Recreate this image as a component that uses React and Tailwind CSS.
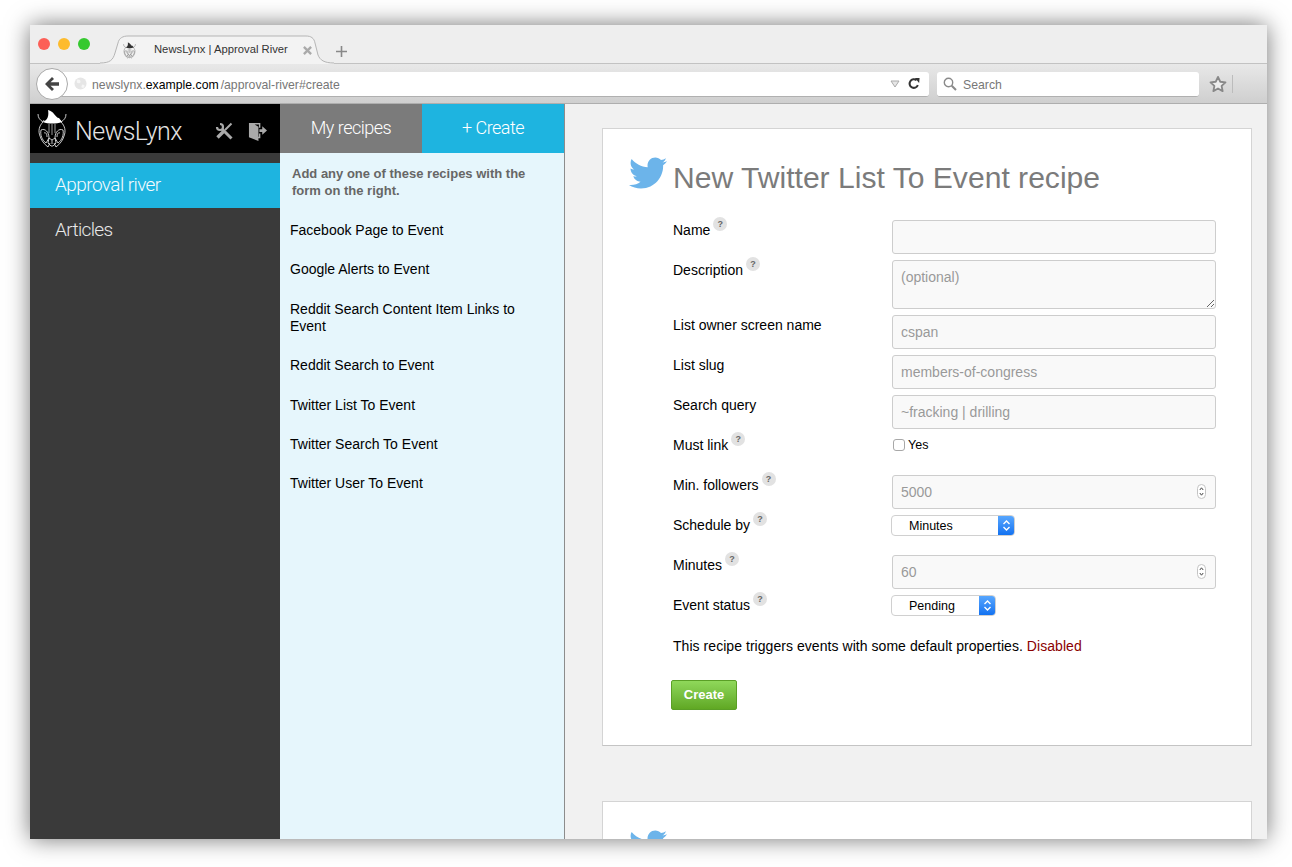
import React from 'react'
import { FaTwitter } from 'react-icons/fa'

const RECIPES = [
   'Facebook Page to Event',
   'Google Alerts to Event',
   'Reddit Search Content Item Links to Event',
   'Reddit Search to Event',
   'Twitter List To Event',
   'Twitter Search To Event',
   'Twitter User To Event',
]

// lynx head with the little hat, stroke colour comes from currentColor
const Lynx = ({ className, hat = '#fff' }) => (
   <svg viewBox="0 0 30 40" className={className} fill="none" stroke="currentColor" strokeWidth="0.9" strokeLinejoin="round">
      <path d="M1 5 C1 9 3 11 6 13 L7 11 M29 5 C29 9 27 11 24 13 L23 11" />
      <path d="M6 13 C2 17 1 22 3 27 C4 31 7 35 11 38 L13 34 M24 13 C28 17 29 22 27 27 C26 31 23 35 19 38 L17 34" />
      <path d="M4 21 C8 19 12 23 12 29 L9 34 C5 31 3 26 4 21 Z M26 21 C22 19 18 23 18 29 L21 34 C25 31 27 26 26 21 Z" />
      <path d="M7 24 C9 23 10 25 10 28 M23 24 C21 23 20 25 20 28" />
      <path d="M12 29 C13 30 14 30 15 31 C16 30 17 30 18 29 L19 34 L16 37 L14 37 L11 34 Z" />
      <path d="M15 31 L15 35" />
      <path d="M12 15 L12 24 M15 15 L15 26 M18 15 L18 24" strokeWidth="0.7" />
      <path d="M6 13 C11 11 12 6 11 1 C14 2 16 3 17 5 C19 7 20 9 22 9 L25 13 C19 15 11 15 6 13 Z" fill={hat} stroke="none" />
   </svg>
)

const Help = () => (
   <span className="ml-[3px] -mt-[5px] flex h-[14px] w-[14px] items-center justify-center rounded-full bg-[#e2e2e2] text-[9px] font-bold leading-none text-[#666]">?</span>
)

const Row = ({ label, help, children }) => (
   <div className="mb-[6px] grid grid-cols-[219px_324px]">
      <div className="flex items-start pt-[2px] text-[14px] leading-[17px] text-black">
         <span>{label}</span>
         {help && <Help />}
      </div>
      <div className="h-fit min-h-[34px]">{children}</div>
   </div>
)

const TextInput = ({ placeholder }) => (
   <input
      readOnly
      placeholder={placeholder}
      className="block h-[34px] w-full rounded-[3px] border border-[#cdcdcd] bg-[#f9f9f9] px-2 text-[14px] text-[#777] outline-none placeholder:text-[#999]"
   />
)

const NumberInput = ({ placeholder }) => (
   <div className="relative">
      <TextInput placeholder={placeholder} />
      <svg viewBox="0 0 9 15" className="absolute right-[10px] top-[9px] h-[15px] w-[9px]" fill="none">
         <rect x="0.5" y="0.5" width="8" height="14" rx="4" fill="#fff" stroke="#c4c4c4" />
         <path d="M2.8 6 L4.5 3.8 L6.2 6 M2.8 9 L4.5 11.2 L6.2 9" stroke="#444" strokeWidth="1" />
      </svg>
   </div>
)

const Select = ({ value, className }) => (
   <div className={`-ml-px flex h-[21px] overflow-hidden rounded-[4px] border border-[#d0d0d0] bg-white ${className}`}>
      <span className="flex-1 pl-[17px] text-[12.5px] leading-[21px] text-black">{value}</span>
      <span className="-my-px -mr-px flex w-[17px] items-center justify-center bg-gradient-to-b from-[#5aa9ff] to-[#0a6ff0]">
         <svg viewBox="0 0 9 13" className="h-[13px] w-[9px]" fill="none" stroke="#fff" strokeWidth="1.4">
            <path d="M1.5 5 L4.5 2 L7.5 5 M1.5 8 L4.5 11 L7.5 8" />
         </svg>
      </span>
   </div>
)

const Heading = ({ title }) => (
   <div className="flex h-[36px] items-center pl-[26px]">
      <FaTwitter className="-mt-[6px] mr-[6px] h-[38px] w-[38px] text-[#6cb4ea]" />
      <h1 className="mt-[4px] whitespace-nowrap text-[30.1px] leading-[36px] text-[#7b7b7b]">{title}</h1>
   </div>
)

const Titlebar = () => (
   <div className="relative flex h-[39px] items-center border-b border-[#c2c2c2] bg-[#eeeeee] pl-[8px]">
      <span className="h-3 w-3 rounded-full bg-[#fc5f57]"></span>
      <span className="ml-2 h-3 w-3 rounded-full bg-[#fdbb2d]"></span>
      <span className="ml-2 h-3 w-3 rounded-full bg-[#35c92f]"></span>
      {/* tab outline sits over the strip's bottom border */}
      <svg viewBox="0 0 234 29" className="absolute bottom-[-1px] left-[70px] h-[29px] w-[234px]">
         <path d="M0 28 C10 28 13 25 15 18 L18 8 C19 3 23 1 28 1 L206 1 C211 1 214 3 215 8 L218 20 C220 25 224 28 234 28 L234 29 L0 29 Z" fill="#f3f3f3" />
         <path d="M0 28 C10 28 13 25 15 18 L18 8 C19 3 23 1 28 1 L206 1 C211 1 214 3 215 8 L218 20 C220 25 224 28 234 28" fill="none" stroke="#b5b5b5" />
      </svg>
      <Lynx className="relative ml-[33px] mt-[12px] h-[17px] w-[13px] text-[#555]" hat="#333" />
      <span className="relative ml-[18px] mt-[12px] text-[11.25px] leading-none text-[#333]">NewsLynx | Approval River</span>
      <svg viewBox="0 0 10 10" className="relative ml-[15px] mt-[12px] h-[9px] w-[9px]" stroke="#aaa" strokeWidth="2.6">
         <path d="M1 1 L9 9 M9 1 L1 9" />
      </svg>
      <svg viewBox="0 0 11 11" className="relative ml-[24px] mt-[14px] h-[11px] w-[11px]" stroke="#888" strokeWidth="1.6">
         <path d="M5.5 0 V11 M0 5.5 H11" />
      </svg>
   </div>
)

const Toolbar = () => (
   <div className="flex h-[40px] items-center border-b border-[#aeaeae] bg-gradient-to-b from-[#e8e8e8] to-[#cfcfcf] pl-[6px]">
      <div className="relative z-10 flex h-[32px] w-[32px] items-center justify-center rounded-full border border-[#a9a9a9] bg-white">
         <svg viewBox="0 0 16 14" className="h-[14px] w-[16px]" fill="#444">
            <path d="M8 0 L10 2 L6.5 5.3 H15 V8.7 H6.5 L10 12 L8 14 L1 7 Z" />
         </svg>
      </div>
      <div className="-ml-2 mt-px flex h-[25px] w-[869px] items-center rounded-r-[3px] border-b border-[#b0b0b0] bg-white pl-[14px] pr-[9px] pt-[4px] text-[12.25px]">
         <svg viewBox="0 0 14 14" className="-mt-[4px] mr-[5px] h-[13px] w-[13px]">
            <circle cx="7" cy="7" r="6.5" fill="#e6e6e6" />
            <path d="M3 3 C5 2 7 3 7 5 C7 7 4 7 3 6 Z M9 8 C11 8 12 9 11 11 C10 12 8 12 8 10 Z" fill="#f6f6f6" />
         </svg>
         <span className="text-[#777]">newslynx.</span>
         <span className="text-black">example.com</span>
         <span className="ml-[2px] flex-1 text-[#777]">/approval-river#create</span>
         <svg viewBox="0 0 10 8" className="-mt-[4px] mr-[8px] h-[8px] w-[10px]" fill="#e6e6e6" stroke="#aaa">
            <path d="M1 1 H9 L5 7 Z" />
         </svg>
         <svg viewBox="0 0 14 14" className="-mt-[4px] h-[13px] w-[12px]" fill="none" stroke="#333" strokeWidth="2.4">
            <path d="M11.5 9 A5 5 0 1 1 10 3.2" />
            <path d="M8 0.5 L13.5 0.5 L13 6.5 Z" fill="#333" stroke="none" />
         </svg>
      </div>
      <div className="ml-2 mt-px flex h-[25px] w-[262px] items-center rounded-[3px] border-b border-[#b0b0b0] bg-white pl-[6px] pt-[4px] text-[12.25px] text-[#777]">
         <svg viewBox="0 0 14 14" className="-mt-[4px] mr-[6px] h-[14px] w-[14px]" fill="none" stroke="#8a8a8a">
            <circle cx="5.5" cy="5.5" r="4.2" strokeWidth="1.4" />
            <path d="M8.7 8.7 L13 13" strokeWidth="2" />
         </svg>
         Search
      </div>
      <svg viewBox="0 0 24 24" className="ml-[10px] h-[18px] w-[18px]" fill="#ededed" stroke="#888" strokeWidth="2.4" strokeLinejoin="round">
         <path d="M12 2.5 L15 9 L22 9.8 L16.8 14.6 L18.2 21.5 L12 18 L5.8 21.5 L7.2 14.6 L2 9.8 L9 9 Z" />
      </svg>
      <span className="ml-[5px] h-[18px] w-px bg-[#bcbcbc]"></span>
   </div>
)

const Sidebar = () => (
   <aside className="w-[250px] shrink-0 bg-[#3a3a3a] font-['Roboto'] font-light">
      <div className="flex h-[49px] items-center bg-black pl-[7px] text-white">
         <Lynx className="h-[40px] w-[30px] text-[#ddd]" />
         <span className="ml-[8px] mt-[5px] text-[25px] leading-none tracking-[-0.6px] text-[#e4e4e4]">NewsLynx</span>
         <svg viewBox="0 0 18 18" className="ml-[33px] mt-[5px] h-[18px] w-[18px]" fill="none" stroke="#aaa">
            <path d="M5 2 A3 3 0 1 1 2 5" strokeWidth="2.2" />
            <path d="M7 7 L16.5 16.5" strokeWidth="3" />
            <path d="M16.5 1.5 L10 8" strokeWidth="2" />
            <path d="M8.5 9.5 L2.5 15.5" strokeWidth="3.4" />
         </svg>
         <svg viewBox="0 0 20 20" className="ml-[15px] mt-[5px] h-[19px] w-[19px]" fill="#aaa">
            <path d="M1 1 H13 V6 H11.5 V2.5 H7 L11 5 V15.5 H11.5 V12 H13 V17 H11 V20 L1 16 Z" />
            <path d="M12 7.5 H15 V4.5 L20 9 L15 13.5 V10.5 H12 Z" />
         </svg>
      </div>
      <div className="mt-[10px] flex h-[45px] items-center bg-[#1eb4e0] pb-px pl-[25px] text-[19px] tracking-[-0.57px] text-[#f4fbfe]">Approval river</div>
      <div className="flex h-[45px] items-center pl-[25px] text-[19px] tracking-[-0.65px] text-[#e8e8e8]">Articles</div>
   </aside>
)

const RecipeList = () => (
   <section className="w-[285px] shrink-0 border-r border-[#8c8c8c] bg-[#e6f6fc]">
      <div className="flex h-[49px] font-['Roboto'] text-[18px] font-light tracking-[-0.5px] text-white">
         <div className="flex w-[142px] items-center justify-center bg-[#7b7b7b] pb-[2px]">My recipes</div>
         <div className="flex flex-1 items-center justify-center bg-[#1eb4e0] pb-[2px]">+ Create</div>
      </div>
      <p className="mb-[23px] ml-[12px] mr-[20px] mt-[12px] text-[13px] font-bold leading-[17px] text-[#666]">
         Add any one of these recipes with the form on the right.
      </p>
      <ul className="pl-[10px] pr-[30px] text-[14px] leading-[17px] text-black">
         {RECIPES.map(recipe => (
            <li key={recipe} className="mb-[22.4px]">{recipe}</li>
         ))}
      </ul>
   </section>
)

const RecipeForm = () => (
   <div className="ml-[37px] mr-[15px] mt-[24px] h-[618px] border border-[#d4d4d4] border-b-[#c4c4c4] bg-white pt-[29px]">
      <Heading title="New Twitter List To Event recipe" />
      <form className="pl-[70px] pt-[26px]">
         <Row label="Name" help><TextInput /></Row>
         <Row label="Description" help>
            <textarea
               readOnly
               placeholder="(optional)"
               className="block h-[49px] w-full resize-y rounded-[3px] border border-[#cdcdcd] bg-[#f9f9f9] px-2 pb-[7px] pt-[8px] text-[14px] leading-[17px] outline-none placeholder:text-[#999]"
            />
         </Row>
         <Row label="List owner screen name"><TextInput placeholder="cspan" /></Row>
         <Row label="List slug"><TextInput placeholder="members-of-congress" /></Row>
         <Row label="Search query"><TextInput placeholder="~fracking | drilling" /></Row>
         <Row label="Must link" help>
            <label className="flex items-center pl-px pt-[2px] text-[12.5px] leading-[16px] text-black">
               <span className="mr-[3px] h-[12px] w-[12px] rounded-[3px] border border-[#a8a8a8] bg-white"></span>
               Yes
            </label>
         </Row>
         <Row label="Min. followers" help><NumberInput placeholder="5000" /></Row>
         <Row label="Schedule by" help><Select value="Minutes" className="w-[124px]" /></Row>
         <Row label="Minutes" help><NumberInput placeholder="60" /></Row>
         <Row label="Event status" help><Select value="Pending" className="w-[105px]" /></Row>
         <p className="pt-px text-[14px] leading-[20px] tracking-[0.05px] text-black">
            This recipe triggers events with some default properties. <span className="text-[#8b0000]">Disabled</span>
         </p>
         <button type="button" className="-ml-[2px] mt-[24px] h-[30px] w-[66px] rounded-[2px] border border-[#5a9f26] bg-gradient-to-b from-[#8fd85a] to-[#60a823] text-[13px] font-bold text-white">
            Create
         </button>
      </form>
   </div>
)

const App = () => {
   return (
      <div className="h-[867px] w-[1292px] overflow-hidden bg-white pl-[30px] pt-[25px] font-['Liberation_Sans',Arial,sans-serif]">
         <div className="flex h-[814px] w-[1237px] flex-col overflow-hidden bg-[#eeeeee] shadow-[0_0_22px_rgba(0,0,0,0.55)]">
            <Titlebar />
            <Toolbar />
            <div className="flex min-h-0 flex-1">
               <Sidebar />
               <RecipeList />
               <main className="min-w-0 flex-1 overflow-hidden bg-[#f1f1f1]">
                  <RecipeForm />
                  <div className="ml-[37px] mr-[15px] mt-[55px] h-[100px] border border-[#d4d4d4] bg-white pt-[29px]">
                     <Heading title="New Twitter Search To Event recipe" />
                  </div>
               </main>
            </div>
         </div>
      </div>
   )
}

export default App
